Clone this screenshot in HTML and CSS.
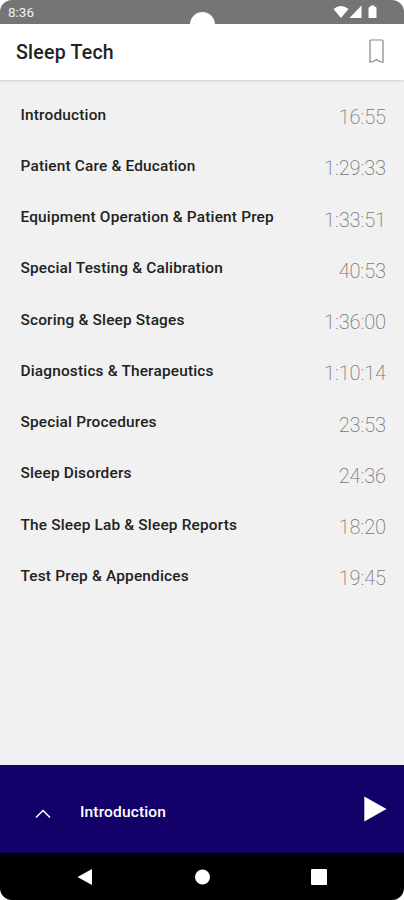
FILE: index.html
```html
<!DOCTYPE html>
<html lang="en">
<head>
    <meta charset="UTF-8">
    <title>Sleep Tech</title>
    <link rel="stylesheet" href="styles.css">
</head>
<body>
    <div class="phone">
        <div class="status">
            <span class="time">8:36</span>
            <svg class="status-icons" width="46" height="14" viewBox="0 0 46 14">
                <path d="M0.5 4Q8 -2 15.5 4L8 13Z" fill="#fff"/>
                <path d="M28.5 0.5V13H16.5Z" fill="#fff"/>
                <path d="M35.5 3Q35.5 2 36.5 2H37.5V0.5H41.5V2H42.5Q43.5 2 43.5 3V13H35.5Z" fill="#fff"/>
            </svg>
            <div class="camera"></div>
        </div>
        <div class="header">
            <h1>Sleep Tech</h1>
            <svg class="bookmark" width="15" height="25" viewBox="0 0 15 25">
                <path d="M2 1H13Q14 1 14 2V23L10.5 22.5L7.5 20.5L4.5 22.5L1 23V2Q1 1 2 1Z" fill="none" stroke="#858585" stroke-width="1.2"/>
            </svg>
        </div>
        <ul class="list">
            <li><span class="name">Introduction</span><span class="len">16:55</span></li>
            <li><span class="name">Patient Care &amp; Education</span><span class="len">1:29:33</span></li>
            <li><span class="name">Equipment Operation &amp; Patient Prep</span><span class="len">1:33:51</span></li>
            <li><span class="name">Special Testing &amp; Calibration</span><span class="len">40:53</span></li>
            <li><span class="name">Scoring &amp; Sleep Stages</span><span class="len">1:36:00</span></li>
            <li><span class="name">Diagnostics &amp; Therapeutics</span><span class="len">1:10:14</span></li>
            <li><span class="name">Special Procedures</span><span class="len">23:53</span></li>
            <li><span class="name">Sleep Disorders</span><span class="len">24:36</span></li>
            <li><span class="name">The Sleep Lab &amp; Sleep Reports</span><span class="len">18:20</span></li>
            <li><span class="name">Test Prep &amp; Appendices</span><span class="len">19:45</span></li>
        </ul>
        <div class="player">
            <svg class="up" width="16" height="10" viewBox="0 0 16 10">
                <path d="M1 8.5L8 1.5L15 8.5" fill="none" stroke="#fff" stroke-width="1.5"/>
            </svg>
            <span class="track">Introduction</span>
            <svg class="play" width="23" height="26" viewBox="0 0 23 26">
                <path d="M0.3 0.5L22.5 13L0.3 25.5Z" fill="#fff"/>
            </svg>
        </div>
        <div class="nav">
            <svg width="16" height="18" viewBox="0 0 16 18"><path d="M0.5 9L15 1V17Z" fill="#fff"/></svg>
            <svg width="16" height="16" viewBox="0 0 16 16"><circle cx="8.5" cy="8" r="7.5" fill="#fff"/></svg>
            <svg width="16" height="16" viewBox="0 0 16 16"><rect width="16" height="16" rx="1" fill="#fff"/></svg>
        </div>
    </div>
</body>
</html>
```

FILE: styles.css
```css
* {margin: 0;padding: 0;box-sizing: border-box;}

body{
    background-color: #fff;
    font-family: Roboto, "Liberation Sans", sans-serif;
}
.phone{
    display: flex;
    flex-direction: column;
    width: 404px;
    height: 900px;
    overflow: hidden;
    border-radius: 12px;
    background-color: #f1f1f1;
}
.status{
    position: relative;
    display: flex;
    justify-content: space-between;
    height: 24px;
    padding: 5px 25px 0 8px;
    background-color: #757575;
}
.time{
    font-size: 13.5px;
    line-height: 15px;
    color: #eee;
}
/* camera cutout */
.camera{
    position: absolute;
    left: 190px;
    top: 12px;
    width: 25px;
    height: 25px;
    border-radius: 50%;
    background-color: #fff;
}
.header{
    display: flex;
    justify-content: space-between;
    height: 56px;
    padding: 15px 20px 0 16px;
    background-color: #fff;
    box-shadow: 0 1px 2px #ccc;
}
.header h1{
    padding-top: 1px;
    font-size: 19.5px;
    font-weight: 500;
    line-height: 26px;
    letter-spacing: 0.25px;
    color: #222;
}
.list{
    flex: 1;
    padding: 9px 18px 0 20.5px;
    list-style: none;
}
.list li{
    display: flex;
    justify-content: space-between;
    height: 51.25px;
    padding-top: 15px;
}
.name{
    padding-top: 0.5px;
    font-size: 15.4px;
    font-weight: 500;
    line-height: 20px;
    letter-spacing: 0.18px;
    color: #222;
}
.len{
    padding-top: 1px;
    font-size: 20px;
    font-weight: 200;
    line-height: 24px;
    letter-spacing: -0.1px;
    color: #777;
}
.player{
    display: flex;
    height: 88px;
    padding: 31px 17px 0 35px;
    background-color: #140069;
}
.up{
    margin-top: 13px;
}
.track{
    flex: 1;
    margin-left: 29px;
    padding-top: 6px;
    font-size: 15.5px;
    font-weight: 500;
    line-height: 20px;
    letter-spacing: 0.15px;
    color: #fff;
}
.nav{
    display: flex;
    align-items: center;
    justify-content: space-between;
    height: 47px;
    padding: 0 77px;
    background-color: #000;
}
```
